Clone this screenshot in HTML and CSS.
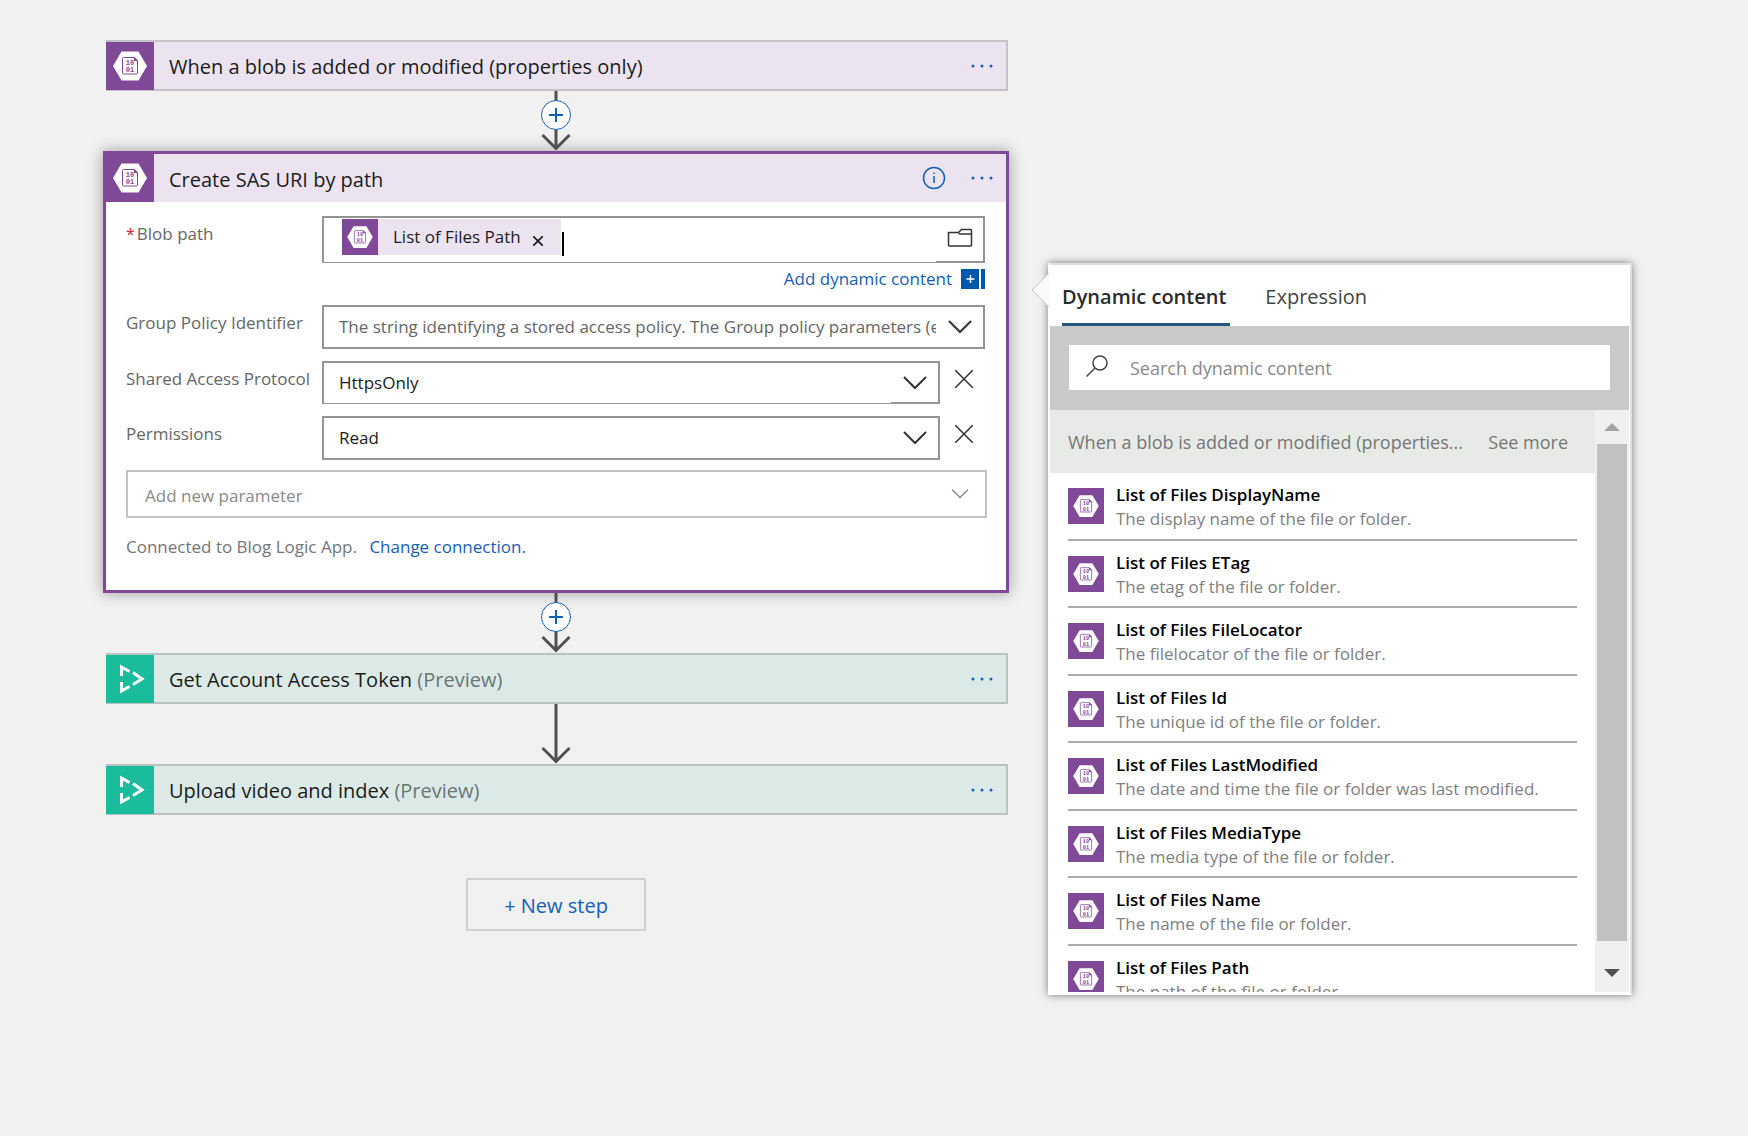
FILE: index.html
```html
<!DOCTYPE html>
<html lang="en">
<head>
<meta charset="utf-8">
<title>Logic App designer</title>
<link rel="stylesheet" href="styles.css">
</head>
<body>
<svg class="sprite" aria-hidden="true">
  <symbol id="blob" viewBox="0 0 48 48">
    <path d="M15.500 9.500h17L41 24 32.500 38.500h-17L7 24z" fill="#fff"/>
    <path d="M17.500 15.500h11l3 3v12.500q0 1-1 1h-13q-1 0-1-1v-14.500q0-1 1-1z" fill="#fff" stroke="#804998" stroke-width="1"/>
    <path d="M28 15l4 4h-4z" fill="#804998"/>
    <text x="24" y="23" class="digits">10</text>
    <text x="24" y="30" class="digits">01</text>
  </symbol>
  <symbol id="video" viewBox="0 0 48 48">
    <path d="M15.500 21V12l8 4.500M15.500 27v9l8-4.500M27 17.500L36 24l-9 5.500" fill="none" stroke="#fff" stroke-width="3"/>
  </symbol>
  <symbol id="dots" viewBox="0 0 24 6">
    <circle cx="3" cy="3" r="1.500"/><circle cx="12" cy="3" r="1.500"/><circle cx="21" cy="3" r="1.500"/>
  </symbol>
  <symbol id="chevron" viewBox="0 0 24 14">
    <path d="M1 1l11 11L23 1" fill="none" stroke="currentColor" stroke-width="2"/>
  </symbol>
  <symbol id="cross" viewBox="0 0 18 18">
    <path d="M0 0l18 18M18 0L0 18" fill="none" stroke="currentColor"/>
  </symbol>
  <symbol id="arrow" viewBox="0 0 30 60">
    <path d="M15 0v58M1.500 44L15 57.500 28.500 44" fill="none" stroke="#505050" stroke-width="3"/>
  </symbol>
</svg>

<main class="designer">
  <section class="flow">
    <article class="step step-blob">
      <span class="badge"><svg><use href="#blob"/></svg></span>
      <h2 class="step-title">When a blob is added or modified (properties only)</h2>
      <button class="icon-btn" aria-label="More"><svg class="dots"><use href="#dots"/></svg></button>
    </article>

    <div class="link">
      <svg class="arrow"><use href="#arrow"/></svg>
      <button class="insert" aria-label="Insert a step"></button>
    </div>

    <article class="card">
      <header class="card-head">
        <span class="badge"><svg><use href="#blob"/></svg></span>
        <h2 class="step-title">Create SAS URI by path</h2>
        <button class="icon-btn" aria-label="Information">
          <svg class="info" viewBox="0 0 24 24"><circle cx="12" cy="12" r="10.500"/><path d="M12 10v7M12 6.500v1.500"/></svg>
        </button>
        <button class="icon-btn" aria-label="More"><svg class="dots"><use href="#dots"/></svg></button>
      </header>
      <div class="card-body">
        <div class="field">
          <label for="path"><span class="required">*</span>Blob path</label>
          <div class="box box-tall box-thin">
            <span class="token">
              <span class="badge badge-small"><svg><use href="#blob"/></svg></span>
              <span class="token-text">List of Files Path</span>
              <button class="token-close" aria-label="Remove"><svg><use href="#cross"/></svg></button>
            </span>
            <span class="caret"></span>
            <input class="entry" id="path" type="text">
            <button class="box-end box-browse" aria-label="Browse">
              <svg class="folder" viewBox="0 0 26 20"><path d="M1.500 4.500h10l3-3h9q1 0 1 1v14.500q0 1-1 1H2.500q-1 0-1-1zM11.500 4.500q1 1.500 2 1.500h11"/></svg>
            </button>
          </div>
        </div>
        <div class="dynamic">
          <a href="#dynamic">Add dynamic content</a>
          <svg class="dynamic-icon" viewBox="0 0 24 20"><path d="M0 0h18v20H0zM20 0h4v20h-4z" fill="#0058ad"/><path d="M5.500 10h8M9.500 6v8" stroke="#fff" stroke-width="1.500"/></svg>
        </div>
        <div class="field">
          <label for="policy">Group Policy Identifier</label>
          <div class="box">
            <input class="entry" id="policy" type="text" placeholder="The string identifying a stored access policy. The Group policy parameters (e.g. start time)">
            <span class="box-end"><svg class="chevron"><use href="#chevron"/></svg></span>
          </div>
        </div>
        <div class="field field-removable">
          <label for="protocol">Shared Access Protocol</label>
          <div class="box box-thin">
            <select class="entry" id="protocol"><option>HttpsOnly</option></select>
            <span class="box-end"><svg class="chevron"><use href="#chevron"/></svg></span>
          </div>
          <button class="remove" aria-label="Remove"><svg><use href="#cross"/></svg></button>
        </div>
        <div class="field field-removable">
          <label for="permissions">Permissions</label>
          <div class="box">
            <select class="entry" id="permissions"><option>Read</option></select>
            <span class="box-end"><svg class="chevron"><use href="#chevron"/></svg></span>
          </div>
          <button class="remove" aria-label="Remove"><svg><use href="#cross"/></svg></button>
        </div>
        <div class="box box-new">
          <select class="entry" aria-label="Add new parameter"><option>Add new parameter</option></select>
          <span class="box-end"><svg class="chevron chevron-small"><use href="#chevron"/></svg></span>
        </div>
        <p class="connection">Connected to Blog Logic App. <a href="#connection">Change connection.</a></p>
      </div>
    </article>

    <div class="link">
      <svg class="arrow"><use href="#arrow"/></svg>
      <button class="insert" aria-label="Insert a step"></button>
    </div>

    <article class="step step-video">
      <span class="badge"><svg><use href="#video"/></svg></span>
      <h2 class="step-title">Get Account Access Token <span class="preview">(Preview)</span></h2>
      <button class="icon-btn" aria-label="More"><svg class="dots"><use href="#dots"/></svg></button>
    </article>

    <div class="link"><svg class="arrow"><use href="#arrow"/></svg></div>

    <article class="step step-video">
      <span class="badge"><svg><use href="#video"/></svg></span>
      <h2 class="step-title">Upload video and index <span class="preview">(Preview)</span></h2>
      <button class="icon-btn" aria-label="More"><svg class="dots"><use href="#dots"/></svg></button>
    </article>

    <button class="new-step">+ New step</button>
  </section>

  <aside class="panel" id="dynamic">
    <svg class="pointer" viewBox="0 0 18 34"><path d="M18 0L1 17l17 17z" fill="#fafafa"/><path d="M18 0L1 17l17 17" fill="none" stroke="#c8c8c8"/></svg>
    <nav class="tabs">
      <button class="tab tab-active">Dynamic content</button>
      <button class="tab">Expression</button>
    </nav>
    <div class="search">
      <label class="search-box">
        <svg class="search-icon" viewBox="0 0 22 22"><circle cx="14" cy="8" r="7"/><path d="M9 13l-8.500 8.500"/></svg>
        <input class="search-input" type="search" placeholder="Search dynamic content" aria-label="Search dynamic content">
      </label>
    </div>
    <div class="results">
      <div class="list">
        <div class="group">
          <span class="group-name">When a blob is added or modified (properties...</span>
          <button class="more">See more</button>
        </div>
        <ul class="items">
          <li><span class="badge badge-small"><svg><use href="#blob"/></svg></span><div><h3>List of Files DisplayName</h3><p>The display name of the file or folder.</p></div></li>
          <li><span class="badge badge-small"><svg><use href="#blob"/></svg></span><div><h3>List of Files ETag</h3><p>The etag of the file or folder.</p></div></li>
          <li><span class="badge badge-small"><svg><use href="#blob"/></svg></span><div><h3>List of Files FileLocator</h3><p>The filelocator of the file or folder.</p></div></li>
          <li><span class="badge badge-small"><svg><use href="#blob"/></svg></span><div><h3>List of Files Id</h3><p>The unique id of the file or folder.</p></div></li>
          <li><span class="badge badge-small"><svg><use href="#blob"/></svg></span><div><h3>List of Files LastModified</h3><p>The date and time the file or folder was last modified.</p></div></li>
          <li><span class="badge badge-small"><svg><use href="#blob"/></svg></span><div><h3>List of Files MediaType</h3><p>The media type of the file or folder.</p></div></li>
          <li><span class="badge badge-small"><svg><use href="#blob"/></svg></span><div><h3>List of Files Name</h3><p>The name of the file or folder.</p></div></li>
          <li><span class="badge badge-small"><svg><use href="#blob"/></svg></span><div><h3>List of Files Path</h3><p>The path of the file or folder.</p></div></li>
        </ul>
      </div>
      <div class="scrollbar">
        <button class="scroll-btn" aria-label="Scroll up"><svg viewBox="0 0 16 8"><path d="M0 8l8-8 8 8z" fill="#a3a3a3"/></svg></button>
        <div class="thumb"></div>
        <button class="scroll-btn" aria-label="Scroll down"><svg viewBox="0 0 16 8"><path d="M0 0l8 8 8-8z" fill="#505050"/></svg></button>
      </div>
    </div>
  </aside>
</main>
</body>
</html>
```
FILE: styles.css
```css
* { box-sizing: border-box; }

body {
  margin: 0;
  background: #f1f1f1;
  color: #1b1b1b;
  font: 17px/24px "Open Sans", "Noto Sans", sans-serif;
}

h2, h3, p, ul { margin: 0; padding: 0; font-weight: 400; }
ul { list-style: none; }
a { color: #1560b3; text-decoration: none; }
svg { display: block; flex: none; }
button, input, select { font: inherit; color: inherit; padding: 0; border: 0; background: none; }

.sprite { position: absolute; width: 0; height: 0; }
.digits { font: bold 7px "Liberation Mono", monospace; fill: #804998; text-anchor: middle; }

.designer {
  display: grid;
  grid-template-columns: 906fr 584fr;
  column-gap: 39px;
  align-items: start;
  padding: 40px 116px 40px 103px;
}

/* Workflow column */
.flow { display: flex; flex-direction: column; min-width: 0; }

.step {
  display: flex;
  align-items: center;
  height: 51px;
  margin: 0 1px 0 3px;
  padding-right: 8px;
  border: 2px solid #c4c2c6;
  border-left-width: 0;
}
.step-blob { background: #ebe3f0; }
.step-video { background: #dceae7; border-color: #b9c4c2; }
.step-title { flex: 1; margin-left: 15px; padding-top: 3px; font-size: 20px; line-height: 28px; }
.preview { color: #6b7573; }

.badge { flex: none; width: 48px; height: 48px; background: #804998; }
.badge svg { width: 100%; height: 100%; }
.badge-small { width: 36px; height: 36px; }
.step-video .badge { background: #1abc9c; }

.icon-btn { display: flex; align-items: center; justify-content: center; width: 32px; height: 32px; margin-left: 16px; }
.dots { width: 24px; height: 6px; fill: #1560b3; }
.info { width: 24px; height: 24px; fill: none; stroke: #1560b3; stroke-width: 1.5; }

.link { position: relative; display: flex; justify-content: center; height: 60px; }
.arrow { width: 30px; height: 60px; }
.insert {
  position: absolute;
  top: 9px;
  width: 30px;
  height: 30px;
  border: 1px solid #1560b3;
  border-radius: 50%;
  background:
    linear-gradient(#1560b3, #1560b3) center / 14px 2px no-repeat,
    linear-gradient(#1560b3, #1560b3) center / 2px 14px no-repeat,
    #fff;
}

.card {
  border: 3px solid #804998;
  background: #fff;
  box-shadow: 0 0 14px rgba(0, 0, 0, 0.35);
}
.card-head { display: flex; align-items: center; height: 48px; padding-right: 8px; background: #ebe3f0; }
.card-body { padding: 14px 21px 31px 20px; }

.field { display: flex; align-items: flex-start; margin-bottom: 12px; }
.field > label { flex: none; width: 196px; padding-top: 8px; line-height: 20px; white-space: nowrap; color: #666; }
.required { margin-right: 2px; color: #e0203a; font-size: 16px; }

.box { display: flex; flex: 1; min-width: 0; height: 44px; border: 2px solid #949494; }
.box-thin { height: 43px; border-bottom-width: 1px; }
.box-thin .box-end { border-bottom: 1px solid #949494; }
.box-tall { height: 47px; }
.entry { flex: 1; min-width: 0; padding-left: 15px; outline: 0; appearance: none; }
.entry::placeholder { color: #666; opacity: 1; }
.box-end { display: flex; flex: none; align-items: center; justify-content: center; width: 47px; }
.box-browse { padding-bottom: 4px; }
.chevron { width: 24px; height: 14px; color: #333; }
.chevron-small { width: 18px; height: 10px; color: #888; }
.folder { width: 26px; height: 20px; fill: none; stroke: #333; stroke-width: 1.5; }

.token { display: flex; align-items: center; height: 36px; margin: 1px 1px 0 18px; padding-right: 18px; background: #ebe3f0; }
.token-text { margin: 0 12px 0 15px; }
.token-close { padding-top: 8px; }
.token-close svg { width: 10px; height: 10px; overflow: visible; stroke-width: 3; }
.caret { width: 2px; height: 24px; margin-top: 14px; background: #000; }

.dynamic { display: flex; align-items: center; justify-content: flex-end; gap: 9px; height: 32px; margin: -12px 0 10px; }
.dynamic-icon { width: 24px; height: 20px; }

.field-removable .remove { width: 45px; height: 36px; padding-left: 15px; }
.remove svg { width: 18px; height: 18px; color: #333; stroke-width: 1.5; overflow: visible; }

.box-new { height: 48px; margin: -2px -2px 0 0; border-color: #c2c2c2; color: #8a8a8a; }
.box-new .entry { padding: 4px 0 0 17px; }
.box-new .box-end { width: 50px; }
.connection { margin-top: 17px; color: #757575; }
.connection a { margin-left: 8px; }

.new-step {
  align-self: center;
  width: 180px;
  height: 53px;
  margin-top: 63px;
  padding-top: 2px;
  border: 2px solid #cfcfcf;
  color: #1560b3;
  font-size: 20px;
}

/* Dynamic content panel */
.panel {
  position: relative;
  min-width: 0;
  margin-top: 223px;
  padding: 0 1px 1px 0;
  border: 2px solid #fff;
  border-top-color: #e0e0e0;
  border-right-color: #e0e0e0;
  background: #fff;
  box-shadow: 0 0 8px rgba(0, 0, 0, 0.5);
}
.pointer { position: absolute; top: 8px; left: -19px; width: 18px; height: 34px; }

.tabs { display: flex; gap: 35px; padding-left: 12px; }
.tab { height: 61px; padding: 6px 0 0; border-bottom: 3px solid transparent; color: #444; font-size: 20px; }
.tab-active { padding-right: 4px; border-color: #24567f; color: #2b2b2b; font-weight: 600; }

.search { padding: 19px 19px 20px; background: #c8cac8; }
.search-box { display: flex; align-items: center; height: 45px; padding-left: 17px; background: #fff; }
.search-icon { width: 22px; height: 22px; margin-bottom: 4px; fill: none; stroke: #444; stroke-width: 1.5; }
.search-input { flex: 1; min-width: 0; margin-left: 22px; outline: 0; font-size: 18px; }
.search-input::placeholder { color: #8a8a8a; opacity: 1; }

.results { display: flex; height: 582px; }
.list { flex: 1; min-width: 0; overflow: hidden; }
.group { display: flex; align-items: center; gap: 12px; height: 63px; padding: 0 27px 0 18px; background: #e8eae8; color: #767676; }
.group-name { flex: 1; min-width: 0; overflow: hidden; text-overflow: ellipsis; white-space: nowrap; font-size: 18px; }
.more { font-size: 18px; }

.items { padding: 0 18px; }
.items li { display: flex; gap: 12px; height: 67px; padding-top: 15px; border-bottom: 2px solid #ababab; }
.items li:nth-child(odd) { height: 68px; }
.items h3 { margin-top: -5px; color: #000; font-size: 17px; font-weight: 600; }
.items p { color: #808080; white-space: nowrap; }

.scrollbar { display: flex; flex-direction: column; width: 34px; padding: 0 2px; background: #f0f0f0; }
.scroll-btn { display: flex; align-items: center; justify-content: center; height: 34px; }
.scroll-btn svg { width: 16px; height: 8px; }
.thumb { height: 497px; margin-bottom: 15px; background: #c1c1c1; }
```
